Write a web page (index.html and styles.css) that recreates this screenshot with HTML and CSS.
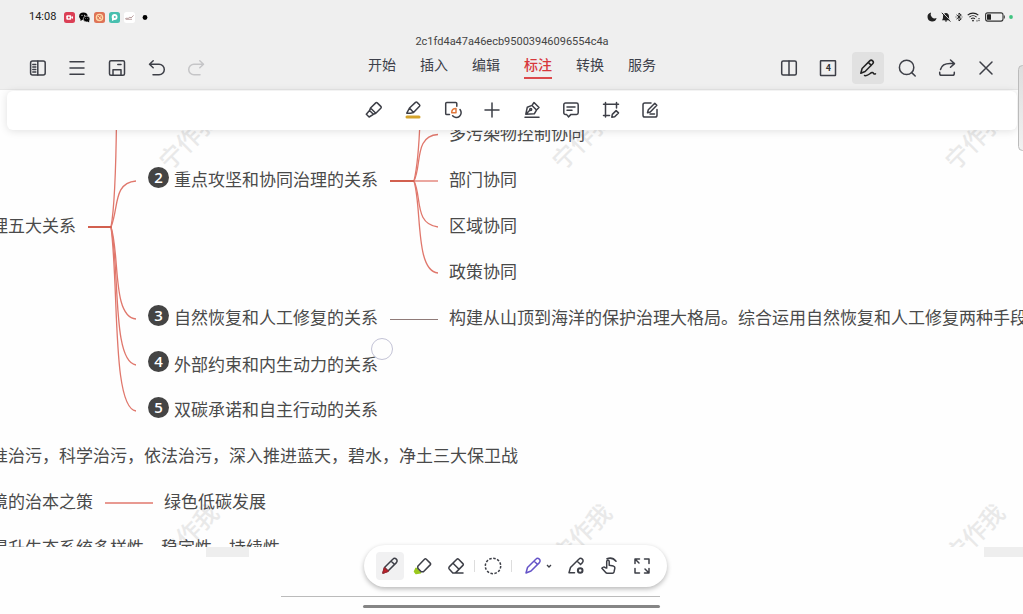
FILE: index.html
```html
<!DOCTYPE html>
<html lang="zh-CN">
<head>
<meta charset="utf-8">
<meta name="viewport" content="width=device-width, initial-scale=1">
<title>标注</title>
<link rel="stylesheet" href="styles.css">
</head>
<body>
<header class="top">
  <div class="status">
    <div class="status-left">
      <time class="clock">14:08</time>
      <svg class="app" viewBox="0 0 11 11"><rect width="11" height="11" rx="2.5" fill="#db3f55"/><rect x="2.3" y="3.2" width="5" height="4.6" rx="1" fill="#fff"/><path d="M7 5.5l2-1.6v3.2z" fill="#fff"/><circle cx="4.8" cy="5.5" r="1" fill="#db3f55"/></svg>
      <svg class="app" viewBox="0 0 11 11"><ellipse cx="4.4" cy="4.2" rx="4.2" ry="3.6"/><path d="M1.5 6l0 3 2.5-1.5z"/><ellipse cx="7.6" cy="7" rx="3.4" ry="2.9" stroke="#efefef" stroke-width=".6"/><path d="M8 9l2.2 1.6-.2-2.4z"/><g fill="#efefef"><circle cx="3" cy="3.3" r=".6"/><circle cx="5.7" cy="3.3" r=".6"/><circle cx="6.6" cy="6.4" r=".4"/><circle cx="8.8" cy="6.4" r=".4"/></g></svg>
      <svg class="app" viewBox="0 0 11 11"><rect width="11" height="11" rx="2.5" fill="#de7357"/><circle cx="5.5" cy="5.5" r="3.1" fill="none" stroke="#ffd9a6" stroke-width="1.4"/><path d="M4 4l3 3M7 4.2L4.8 7.4" stroke="#ffd9a6"/></svg>
      <svg class="app" viewBox="0 0 11 11"><rect width="11" height="11" rx="2.5" fill="#48bfaf"/><circle cx="5.6" cy="5" r="2.9" fill="#fff"/><path d="M3 5v4l3-1.5z" fill="#fff"/><circle cx="5.8" cy="5" r="1" fill="#48bfaf"/></svg>
      <svg class="app" viewBox="0 0 11 11"><rect width="11" height="11" rx="2.5" fill="#fff"/><path d="M1 7l2-1 1 .6L6 5l1 1 2.5-2.6M2 7.3h6" fill="none" stroke="#a88" stroke-width=".8"/></svg>
      <svg class="app" viewBox="0 0 11 11"><circle cx="6" cy="5.500" r="2.4"/></svg>
    </div>
    <div class="status-right">
      <svg width="10" height="10" viewBox="0 0 10 10"><path d="M4 .5A4.6 4.6 0 1 0 9.6 6 4.2 4.2 0 0 1 4 .5z"/></svg>
      <svg width="10" height="10" viewBox="0 0 10 10"><path d="M.8 8.200c1.200-1 1.200-2 1.200-3.700C2 2.300 3.300 1 5 1s3 1.300 3 3.500c0 1.700 0 2.700 1.200 3.700zM3.800 8.500h2.400c0 1.500-2.400 1.500-2.400 0z"/><path d="M1.400.3l8 8.400" stroke="#efefef" stroke-width=".9"/><path d="M.8.8l8.600 8.800" stroke="#222" stroke-width="1"/></svg>
      <svg width="8" height="10" viewBox="0 0 8 10"><path d="M1.500 2.800l4.800 4L4 9V1l2.300 2.100-4.800 4" fill="none" stroke="#222"/><path d="M.6 5h.8M6.600 5h.8" stroke="#222"/></svg>
      <svg width="14" height="10" viewBox="0 0 14 10"><g fill="none" stroke="#222" stroke-width="1.100"><path d="M.7 3.200a7.800 7.800 0 0 1 10.600 0M2.400 5.100a5.300 5.300 0 0 1 7.200 0M4.100 6.900a2.800 2.800 0 0 1 3.800 0"/></g><circle cx="6" cy="8.600" r=".9"/><path d="M10 9.500v-2M12 6v3.500" stroke="#222" stroke-dasharray="1.200 .7"/></svg>
      <svg width="20" height="10" viewBox="0 0 20 10"><rect x=".6" y=".9" width="17.400" height="8.200" rx="2" fill="none" stroke="#333" stroke-width="1.100"/><rect x="2" y="2.300" width="4" height="5.400" rx=".5"/><path d="M19.300 3.500v3" stroke="#333"/></svg>
      <svg width="4" height="10" viewBox="0 0 4 10"><circle cx="2" cy="5" r="1.900" fill="#3fc37f"/></svg>
    </div>
  </div>
  <div class="bar">
    <div class="group group-left">
      <button class="tool" aria-label="侧栏"><svg viewBox="0 0 20 20"><rect x="2.600" y="3" width="14.600" height="14" rx="2"/><path d="M9.800 3v14M4.800 6.500h3M4.800 9h3M4.800 11.500h3M4.800 14h3"/></svg></button>
      <button class="tool" aria-label="菜单"><svg viewBox="0 0 20 20"><path d="M3 3.800h14M3 10h14M3 16.200h14"/></svg></button>
      <button class="tool" aria-label="保存"><svg viewBox="0 0 20 20"><rect x="2.500" y="2.700" width="15" height="14.600" rx="1.500"/><path d="M6 17v-5.200h8V17M10.800 6.500h3.200"/></svg></button>
      <button class="tool" aria-label="撤销"><svg viewBox="0 0 20 20"><path d="M6.200 2.800L2.500 6.200l3.700 3.600M2.800 6.200H12a5.300 5.300 0 0 1 0 10.600H6"/></svg></button>
      <button class="tool" aria-label="重做" disabled><svg viewBox="0 0 20 20"><path d="M13.800 2.800l3.700 3.400-3.700 3.600M17.200 6.200H8a5.300 5.300 0 0 0 0 10.600h6"/></svg></button>
    </div>
    <div class="center">
      <h1 class="doc-name">2c1fd4a47a46ecb95003946096554c4a</h1>
      <nav class="tabs">
        <a href="#start">开始</a><a href="#insert">插入</a><a href="#edit">编辑</a><a class="current" href="#mark">标注</a><a href="#convert">转换</a><a href="#service">服务</a>
      </nav>
    </div>
    <div class="group group-right">
      <button class="tool" aria-label="分栏"><svg viewBox="0 0 20 20"><rect x="2.700" y="3" width="14.600" height="14" rx="1.500"/><path d="M10 3v14"/></svg></button>
      <button class="tool" aria-label="页面 4"><svg viewBox="0 0 20 20"><rect x="2.500" y="2.800" width="15" height="14.600" rx=".5"/></svg><span class="page-count">4</span></button>
      <button class="tool active" aria-label="手写"><svg viewBox="0 0 20 20"><path d="M2.800 15.200l1.300-4.700 7.600-7.600a2 2 0 0 1 3 2.900l-7.600 7.700zM10.500 4.600l2.800 2.800M6.500 17.500c2 .5 3.500-.3 5-1.500 1.800-1.500 3.300-2 4-.7.400.8 1.200.9 2 .5"/></svg></button>
      <button class="tool" aria-label="搜索"><svg viewBox="0 0 20 20"><circle cx="9.600" cy="9.400" r="7.200"/><path d="M14.700 14.600l3.500 3.400"/></svg></button>
      <button class="tool" aria-label="分享"><svg viewBox="0 0 20 20"><path d="M13.500 2l4 3.600-4 3.700M17.200 5.600H13C8 5.600 4.500 8 3.500 11.500M2.700 14.200v1.300c0 1.200.6 1.800 1.800 1.800h11c1.200 0 1.800-.6 1.800-1.800v-1.300"/></svg></button>
      <button class="tool" aria-label="关闭"><svg viewBox="0 0 20 20"><path d="M4 4l12 12M16 4L4 16"/></svg></button>
    </div>
  </div>
</header>

<main class="document">
  <div class="ribbon" role="toolbar" aria-label="标注工具">
    <div class="ribbon-tools">
      <button class="tool" aria-label="荧光笔"><svg viewBox="0 0 20 20"><path d="M6.500 8l5-4.900c.7-.7 1.300-.7 2 0l3.300 3.300c.6.600.6 1.200 0 1.800l-5 5zM6.500 8l-1 2.500 3.900 3.800 2.400-1.100M5.500 10.500l-3.200 3.800 2.800 2.700 4.300-2.700"/></svg></button>
      <button class="tool" aria-label="高亮"><svg viewBox="0 0 20 20"><path d="M3.800 13.200l2.700-5.200 6-5.600c.6-.5 1-.5 1.600 0l2.400 2.300c.5.500.5 1 0 1.600l-6 6.200-3 .700zM6.500 8l4 4.500"/><path d="M4 17h12" stroke="#d4a32c" stroke-width="3"/></svg></button>
      <button class="tool" aria-label="形状"><svg viewBox="0 0 20 20"><path d="M6.500 14.500H3.800c-.7 0-1.100-.4-1.100-1.100V3.600c0-.7.400-1.100 1.100-1.100h8.900c.7 0 1.100.4 1.100 1.100v2.700"/><path d="M17 9.500a4.800 4.800 0 1 1-7.400 6.300"/><path d="M8.700 12.800c0-2.700 1.600-4.200 4.300-4.200v4.200z" stroke="#e1783d"/></svg></button>
      <button class="tool" aria-label="添加"><svg viewBox="0 0 20 20"><path d="M10 3v14M3 10h14"/></svg></button>
      <button class="tool" aria-label="签名"><svg viewBox="0 0 20 20"><path d="M3.800 14.200l1.500-7 4.700-1.800 4.500 4.600-2.200 3.800zM3.800 14.200l4-4M10 5.400l2-2.900 5 5-2.500 2.500M3 17.200h14"/><circle cx="8.700" cy="9.600" r="1"/></svg></button>
      <button class="tool" aria-label="批注"><svg viewBox="0 0 20 20"><path d="M4.500 3h11c1 0 1.700.7 1.700 1.700v8c0 1-.7 1.700-1.700 1.700H10l-2.500 2.500-2-2.500h-1c-1 0-1.700-.7-1.700-1.700v-8C2.800 3.700 3.500 3 4.500 3zM6 6.900h8M6 10.300h5"/></svg></button>
      <button class="tool" aria-label="区域"><svg viewBox="0 0 20 20"><path d="M4.500 2.500v14.500M2.500 4.200h15M15.500 2.500V8M2.500 15.500h6M10.800 17.200l.5-2.800 3.800-3.800 2.400 2.300-3.800 3.900z"/></svg></button>
      <button class="tool" aria-label="编辑批注"><svg viewBox="0 0 20 20"><path d="M11 3H4.800c-1 0-1.800.7-1.800 1.800v10.400c0 1 .8 1.800 1.800 1.800h10.400c1 0 1.800-.8 1.800-1.800V9.500M7.500 12.800l.8-3 6.500-6.500 2 2-6.500 6.700zM10 14h4.500"/></svg></button>
    </div>
  </div>

  <section class="mindmap">
    <span class="watermark w1">宁作我</span><span class="watermark w2">宁作我</span><span class="watermark w3">宁作我</span>
    <span class="watermark w4">宁作我</span><span class="watermark w5">宁作我</span><span class="watermark w6">宁作我</span>
    <svg class="links" viewBox="0 90 1023 454" width="1023" height="454">
      <g fill="none" stroke="#e0776c" stroke-width="1.300">
        <path d="M111 227C115 205 116 165 116.500 120"/>
        <path d="M111 227C119 207 113 183 136 181"/>
        <path d="M111 227C120 255 112 317 136 319"/>
        <path d="M111 227C120 270 112 362 136 365"/>
        <path d="M111 227C119 290 112 408 136 411"/>
        <path d="M414 181C418 164 419 148 420 120"/>
        <path d="M414 181C422 165 414 136 438 134.500"/>
        <path d="M414 181h24"/>
        <path d="M414 181C422 197 414 224 438 227"/>
        <path d="M414 181C422 208 415 271 438 273"/>
        <path d="M105 503h48" stroke-width="1.500"/>
        <path d="M88 227h23.500M390 181h24" stroke="#d2604f" stroke-width="2.200"/>
      </g>
      <path d="M390 319.500h48" stroke="#8f7a78" stroke-width="1"/>
    </svg>
    <span class="node root">理五大关系</span>
    <i class="num b2">2</i><span class="node t2">重点攻坚和协同治理的关系</span>
    <i class="num b3">3</i><span class="node t3">自然恢复和人工修复的关系</span>
    <i class="num b4">4</i><span class="node t4">外部约束和内生动力的关系</span>
    <i class="num b5">5</i><span class="node t5">双碳承诺和自主行动的关系</span>
    <span class="node c1">多污染物控制协同</span>
    <span class="node c2">部门协同</span>
    <span class="node c3">区域协同</span>
    <span class="node c4">政策协同</span>
    <span class="node c5">构建从山顶到海洋的保护治理大格局。综合运用自然恢复和人工修复两种手段</span>
    <span class="node r1">准治污，科学治污，依法治污，深入推进蓝天，碧水，净土三大保卫战</span>
    <span class="node r2">境的治本之策</span>
    <span class="node r3">绿色低碳发展</span>
    <span class="node r4">提升生态系统多样性、稳定性、持续性</span>
    <span class="pointer"></span>
  </section>
  <div class="blank"><span class="stub s1"></span><span class="stub s2"></span></div>
</main>

<div class="pens" role="toolbar" aria-label="画笔">
  <button class="pen active" aria-label="笔"><svg viewBox="0 0 20 20"><path d="M3 17l1.500-5.500 8.300-8.300a2.300 2.300 0 0 1 3.600 3.400L8 15zM11 5l3.600 3.500M4.500 11.500L8 15"/><path d="M3 17l1.500-5L8 15.200z" fill="#d3202c" stroke="#a5232c"/></svg></button>
  <button class="pen" aria-label="荧光笔"><svg viewBox="0 0 20 20"><path d="M3 12.200l4.500 4.500-4.500.800-1.500-2z" fill="#9bc91f" stroke="#9bc91f"/><path d="M4.800 10.200l6.700-7c.6-.6 1.200-.6 1.800 0l3.900 3.900c.6.600.6 1.200 0 1.800l-6.800 6.800H8.200l-3.400-3.500z"/></svg></button>
  <button class="pen" aria-label="橡皮"><svg viewBox="0 0 20 20"><path d="M3.200 10.900l7.600-7.600c.6-.6 1.200-.6 1.800 0L16.900 7.600c.6.600.6 1.200 0 1.800L9.500 16.900H6.800l-3.600-4c-.6-.7-.6-1.300 0-2zM7 7.200l6 6M9 16.900h8"/></svg></button>
  <span class="divider"></span>
  <button class="pen lasso" aria-label="套索"><svg viewBox="0 0 20 20"><circle cx="10" cy="10" r="7.700" stroke-dasharray="2.500 1.530"/></svg></button>
  <span class="divider"></span>
  <button class="pen violet" aria-label="智能笔"><svg viewBox="0 0 20 20"><path d="M3 17l1.500-5.500 8.300-8.300a2.300 2.300 0 0 1 3.600 3.400L8 15zM11 5l3.600 3.500"/></svg></button>
  <button class="more" aria-label="更多"><svg viewBox="0 0 8 8"><path d="M2 3l2 2 2-2"/></svg></button>
  <button class="pen" aria-label="笔设置"><svg viewBox="0 0 20 20"><path d="M8.500 16.700H3l1.500-5.200 8.300-8.300a2.300 2.300 0 0 1 3.600 3.400L14.500 8.500M11 5l3.600 3.500"/><circle cx="14.200" cy="14.500" r="2.300" stroke-width="2"/></svg></button>
  <button class="pen" aria-label="手势"><svg viewBox="0 0 20 20"><path d="M7.700 12V5.500c0-1.700 2.500-1.700 2.500 0v3.700l4.200.9c1.100.3 1.600 1 1.400 2.200l-.8 3.700c-.2.800-.7 1.200-1.500 1.200H8.300c-.8 0-1.300-.3-1.800-1l-3.600-4c.8-1.200 2.400-1.500 3.500-.5zM8 2.700c3.500-1.200 6.800-.3 9 2.600"/></svg></button>
  <button class="pen" aria-label="全屏"><svg viewBox="0 0 20 20"><path d="M3 7.500V3h4.500M3 3l4 4M12.500 3H17v4.500M7.500 17H3v-4.500M17 12.500V17h-4.500M17 17l-4-4"/></svg></button>
</div>
<div class="page-line"></div>
<div class="home-line"></div>
<div class="edge-handle"></div>
</body>
</html>
```
FILE: styles.css
```css
* { box-sizing: border-box; }

body {
  margin: 0;
  min-height: 100vh;
  display: flex;
  flex-direction: column;
  position: relative;
  overflow: hidden;
  background: #fefefe;
  color: #333;
  font-family: Roboto, "Noto Sans CJK SC", sans-serif;
}

button {
  padding: 0;
  border: 0;
  background: none;
  color: inherit;
  font: inherit;
}

svg { display: block; }

/* Header */
.top {
  background: #efefef;
  border-bottom: 1px solid #e6e6e6;
}

.status {
  display: flex;
  justify-content: space-between;
  align-items: center;
  height: 34px;
  padding: 0 10px 0 29px;
}

.status-left,
.status-right {
  display: flex;
  align-items: center;
  gap: 4px;
}

.status-right { fill: #222; }

.clock {
  margin-right: 4px;
  font-size: 11px;
  line-height: 16px;
  color: #222;
}

.app {
  width: 11px;
  height: 11px;
}

.bar {
  display: grid;
  grid-template-columns: 1fr auto 1fr;
  align-items: end;
  height: 55px;
  padding: 0 17px 0 18px;
}

.group {
  display: grid;
  justify-items: center;
  padding-bottom: 5px;
}

.group-left {
  grid-template-columns: repeat(5, 1fr);
  width: 198px;
}

.group-right {
  grid-template-columns: repeat(6, 1fr);
  width: 237px;
  justify-self: end;
}

.tool {
  position: relative;
  display: grid;
  place-items: center;
  width: 32px;
  height: 32px;
  border-radius: 4px;
}

.tool svg,
.pen svg {
  width: 20px;
  height: 20px;
  fill: none;
  stroke: #3d3f47;
  stroke-width: 1.5;
  stroke-linecap: round;
  stroke-linejoin: round;
}

.tool:disabled svg { stroke: #c5c5c7; }

.tool.active { background: #e1e1e1; }

.tool.active svg { stroke: #222; }

.page-count {
  position: absolute;
  inset: 0;
  font-size: 9px;
  font-weight: 700;
  line-height: 32px;
  text-align: center;
}

.center {
  align-self: start;
  display: flex;
  flex-direction: column;
  align-items: center;
}

.doc-name {
  margin: 0;
  font-size: 11px;
  font-weight: 400;
  line-height: 16px;
  color: #444;
}

.tabs {
  display: flex;
  gap: 24px;
  padding-top: 3px;
}

.tabs a {
  height: 26px;
  border-bottom: 2px solid transparent;
  font-size: 14px;
  line-height: 24px;
  color: #3d3f4a;
  text-decoration: none;
}

.tabs .current {
  border-color: #dc4a4c;
  color: #d7373b;
  font-weight: 500;
}

/* Document */
.document {
  position: relative;
  flex: 1;
}

.ribbon {
  position: absolute;
  z-index: 2;
  top: 1px;
  left: 7px;
  right: 6px;
  display: flex;
  justify-content: center;
  padding: 3px 0 4px;
  border-radius: 6px;
  background: #fff;
  box-shadow: 0 1px 8px rgba(0, 0, 0, 0.12);
}

.ribbon-tools {
  display: grid;
  grid-template-columns: repeat(8, 1fr);
  justify-items: center;
  width: 316px;
}

.mindmap {
  position: relative;
  height: 457px;
  overflow: hidden;
}

.links {
  position: absolute;
  top: 0;
  left: 0;
}

.node {
  position: absolute;
  font-family: "Noto Sans CJK SC", sans-serif;
  font-size: 17px;
  font-weight: 400;
  line-height: 24px;
  color: #4a4a4a;
  white-space: nowrap;
}

.root { left: -9px; top: 123px; }
.t2 { left: 174px; top: 77px; }
.t3 { left: 174px; top: 215px; }
.t4 { left: 174px; top: 262px; }
.t5 { left: 174px; top: 307px; }
.c1 { left: 449px; top: 31px; }
.c2 { left: 449px; top: 77px; }
.c3 { left: 449px; top: 123px; }
.c4 { left: 449px; top: 169px; }
.c5 { left: 449px; top: 215px; }
.r1 { left: -9px; top: 353px; }
.r2 { left: -9px; top: 399px; }
.r3 { left: 164px; top: 399px; }
.r4 { left: -9px; top: 445px; }

.num {
  position: absolute;
  left: 148px;
  width: 21px;
  height: 21px;
  border-radius: 50%;
  background: #444;
  color: #fff;
  font-family: "Open Sans", sans-serif;
  font-size: 15px;
  font-style: normal;
  font-weight: 600;
  line-height: 20px;
  text-align: center;
}

.b2 { top: 77px; }
.b3 { top: 215px; }
.b4 { top: 261px; }
.b5 { top: 307px; }

.watermark {
  position: absolute;
  width: 72px;
  font-family: "Noto Sans CJK SC", sans-serif;
  font-size: 24px;
  font-weight: 500;
  line-height: 32px;
  color: #e9e9e9;
  transform: rotate(-45deg);
}

.w1, .w4 { left: 152px; }
.w2, .w5 { left: 545px; }
.w3, .w6 { left: 938px; }
.w1, .w2, .w3 { top: 33px; }
.w4, .w5, .w6 { top: 427px; }

.pointer {
  position: absolute;
  left: 371px;
  top: 248px;
  width: 22px;
  height: 22px;
  border: 1px solid #c3c3d6;
  border-radius: 50%;
}

.blank {
  position: relative;
  height: 60px;
}

.stub {
  position: absolute;
  top: 0;
  width: 43px;
  height: 10px;
  background: #eee;
}

.s1 { left: 206px; }
.s2 { left: 984px; }

/* Floating pen palette */
.pens {
  position: absolute;
  z-index: 3;
  bottom: 27px;
  left: 8px;
  right: 0;
  display: flex;
  align-items: center;
  gap: 5px;
  width: max-content;
  margin: 0 auto;
  padding: 7px 11px 7px 12px;
  border-radius: 21px;
  background: #fff;
  box-shadow: 0 2px 5px rgba(0, 0, 0, 0.28);
}

.pen {
  display: grid;
  place-items: center;
  width: 28px;
  height: 28px;
  border-radius: 4px;
}

.pen.active { background: #f1f1f2; }

.pen.violet { margin-left: 3px; }

.pen.violet svg { stroke: #6554c8; }

.pen.lasso svg { stroke-linecap: butt; }

.divider {
  width: 1px;
  height: 12px;
  margin: 0 -1px;
  background: #ddd;
}

.more {
  width: 8px;
  height: 28px;
  margin: 0 4px 0 -7px;
}

.more svg {
  width: 8px;
  height: 8px;
  fill: none;
  stroke: #3d3f47;
  stroke-width: 1.3;
}

.page-line,
.home-line {
  position: absolute;
  right: 363px;
}

.page-line {
  left: 281px;
  bottom: 17px;
  height: 1px;
  background: #bbb;
}

.home-line {
  left: 363px;
  bottom: 6px;
  height: 3px;
  border-radius: 2px;
  background: #858585;
}

.edge-handle {
  position: absolute;
  z-index: 4;
  top: 65px;
  right: -4px;
  width: 9px;
  height: 86px;
  border: 1px solid #bbb;
  border-radius: 5px;
  background: linear-gradient(#dedede, #f1f1f1);
}
```
